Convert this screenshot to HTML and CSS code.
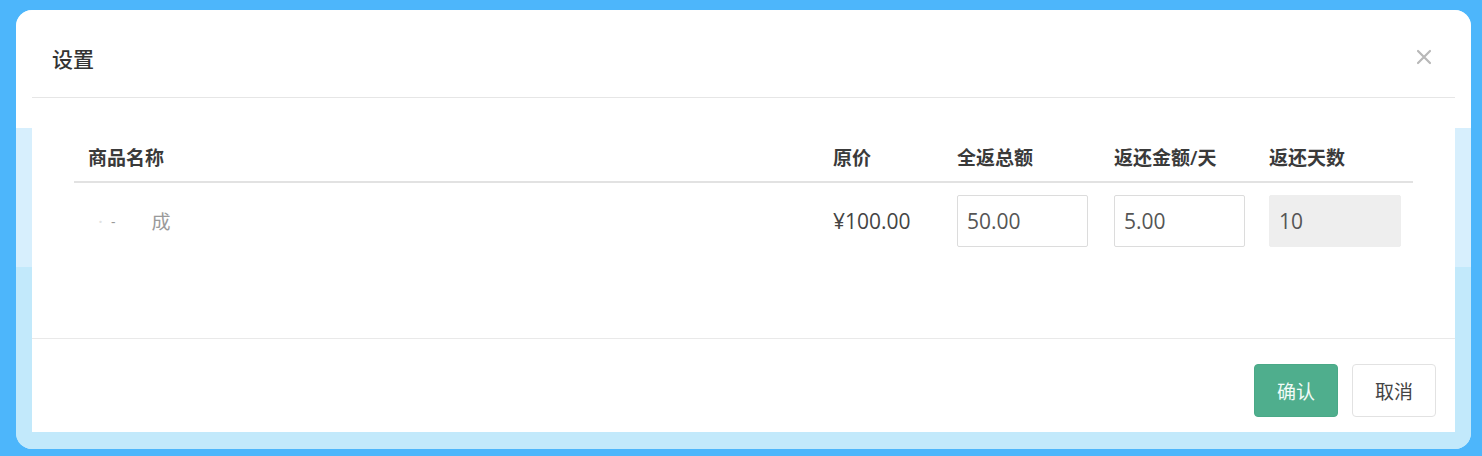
FILE: index.html
```html
<!DOCTYPE html>
<html lang="zh">
<head>
<meta charset="utf-8">
<title>设置</title>
<link rel="stylesheet" href="styles.css">
</head>
<body>
<div class="frame">
  <div class="head">
    <div class="head-inner">
      <h4 class="title">设置</h4>
      <button class="close" aria-label="关闭">
        <svg width="16" height="16" viewBox="0 0 16 16"><path d="M2 2L14 14M14 2L2 14" stroke="#b8b8b8" stroke-width="2.2" stroke-linecap="round"/></svg>
      </button>
    </div>
  </div>
  <div class="mid">
    <div class="panel">
      <div class="body">
        <table class="tbl">
          <colgroup>
            <col class="c1"><col class="c2"><col class="c3"><col class="c4"><col class="c5">
          </colgroup>
          <thead>
            <tr><th>商品名称</th><th>原价</th><th>全返总额</th><th>返还金额/天</th><th>返还天数</th></tr>
          </thead>
          <tbody>
            <tr>
              <td><span class="redact"><span class="dot">·</span><span class="dash">-</span><span class="ch">成</span></span></td>
              <td class="price">¥100.00</td>
              <td><input class="inp" value="50.00"></td>
              <td><input class="inp" value="5.00"></td>
              <td><input class="inp dis" value="10" disabled></td>
            </tr>
          </tbody>
        </table>
      </div>
      <div class="foot">
        <button class="btn ok">确认</button>
        <button class="btn cancel">取消</button>
      </div>
    </div>
  </div>
</div>
</body>
</html>
```

FILE: styles.css
```css
* { box-sizing: border-box; }
html, body { margin: 0; }
body {
  background: #4db6fb;
  padding: 10px 11px 7px 16px;
  font-family: "Open Sans", "Noto Sans CJK SC", sans-serif;
  color: #333;
  height: 456px;
}
.frame {
  width: 1455px;
  height: 439px;
  border-radius: 16px;
  overflow: hidden;
  background: #c2e9fb;
  display: flex;
  flex-direction: column;
}
.head {
  background: #fff;
  height: 118px;
  padding: 0 16px;
}
.head-inner {
  height: 88px;
  border-bottom: 1px solid #e6e6e6;
  display: flex;
  align-items: center;
  justify-content: space-between;
  padding: 8px 23px 0 20px;
}
.title {
  margin: 0;
  font-size: 21px;
  font-weight: 500;
  color: #333;
}
.close {
  border: 0;
  background: none;
  padding: 0;
  width: 16px;
  height: 16px;
  display: flex;
  margin-top: -2px;
}
.mid {
  padding: 0 16px 17px;
  background: linear-gradient(#d7effd 0, #d7effd 139px, #c2e9fb 139px);
}
.panel {
  background: #fff;
  height: 304px;
  display: flex;
  flex-direction: column;
}
.body {
  padding: 8px 42px 0;
  height: 210px;
}
.tbl {
  width: 100%;
  border-collapse: collapse;
  table-layout: fixed;
}
.c1 { width: 745px; }
.c2 { width: 124px; }
.c3 { width: 157px; }
.c4 { width: 155px; }
.c5 { width: 158px; }
.tbl th {
  text-align: left;
  font-weight: 600;
  font-size: 19px;
  color: #3a3a3a;
  height: 46px;
  padding: 0 0 4px 14px;
  border-bottom: 2px solid #e2e2e2;
  vertical-align: middle;
}
.tbl td {
  padding: 12px 0 12px 14px;
  font-size: 19px;
  vertical-align: middle;
}
.price { color: #444; padding-left: 14px; font-size: 21px !important; }
.redact { display: inline-flex; align-items: center; color: #ccc; }
.dot { margin-left: 10px; color: #e2e2e2; }
.dash { margin-left: 8px; color: #999; font-size: 14px; }
.ch { margin-left: 36px; color: #9a9a9a; }
.inp {
  width: 131px;
  height: 52px;
  border: 1px solid #dcdcdc;
  border-radius: 2px;
  padding: 0 9px;
  font-family: "Open Sans", sans-serif;
  font-size: 21px;
  color: #555;
  background: #fff;
  outline: none;
}
.inp.dis {
  width: 132px;
  background: #eeeeee;
  border-color: #eeeeee;
  color: #555;
}
.foot {
  flex: 1;
  border-top: 1px solid #e9e9e9;
  display: flex;
  justify-content: flex-end;
  align-items: flex-start;
  gap: 14px;
  padding: 25px 19px 0 0;
}
.btn {
  width: 84px;
  height: 53px;
  border-radius: 4px;
  font-family: "Noto Sans CJK SC", sans-serif;
  font-size: 19px;
  border: 1px solid #e2e2e2;
  background: #fff;
  color: #444;
  padding: 0;
}
.btn.ok {
  background: #4fae8d;
  border-color: #4aa987;
  color: #f2fbf7;
}
```
